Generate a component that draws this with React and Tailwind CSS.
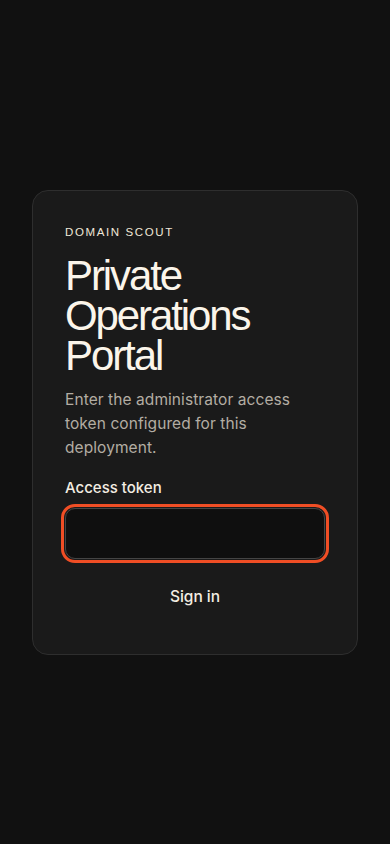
export default function App() {
  return (
    <div className="min-h-screen w-full bg-[#111111] flex items-center justify-center px-8" style={{ fontFamily: "'Liberation Sans', Arial, sans-serif" }}>
      <div className="w-[326px] rounded-2xl border border-[#2e2e2e] bg-[#1a1a1a] px-8 pt-[33px] pb-[35px]">
        <div className="text-[11.5px] leading-4 tracking-[0.14em] text-[#efe7d8]">DOMAIN SCOUT</div>
        <h1 className="mt-4 text-[42px] leading-[40px] tracking-[-0.05em] text-[#fbf5ea] font-normal">
          Private Operations Portal
        </h1>
        <div style={{ fontFamily: "Inter, 'Noto Sans', sans-serif" }}>
          <p className="mt-3 text-[15.5px] leading-6 tracking-[0.005em] text-[#b3ada3]">
            Enter the administrator access token configured for this deployment.
          </p>
          <label className="mt-4 block text-[15px] leading-6 font-medium text-[#f3ede2]">Access token</label>
          <input
            type="password"
            className="mt-2 block w-full h-[51px] rounded-[10px] border border-[#444444] bg-[#0f0f0f] outline-[3px] outline-offset-[1px] outline-solid outline-[#f04e25] text-white px-3"
          />
          <button className="mt-4 block w-full h-11 text-[15.5px] font-medium text-[#f3ede2]">Sign in</button>
        </div>
      </div>
    </div>
  );
}
